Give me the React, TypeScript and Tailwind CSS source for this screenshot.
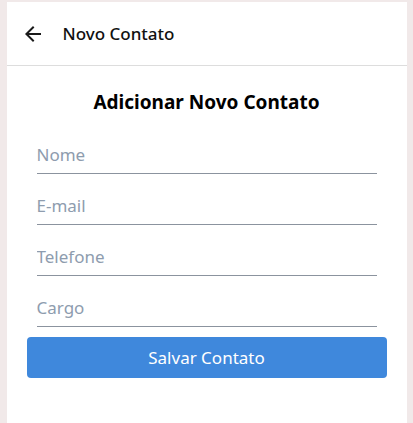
import React, { useState } from 'react';
import { MdArrowBack } from 'react-icons/md';

const fields = ['Nome', 'E-mail', 'Telefone', 'Cargo'];

const App: React.FC = () => {
  const [values, setValues] = useState<Record<string, string>>({});

  return (
    <div
      className="min-h-[423px] bg-[#f1e9e9] pt-[2px]"
      style={{ fontFamily: '"Noto Sans", "Open Sans", sans-serif' }}
    >
      <div className="mx-auto w-[400px] min-h-[421px] bg-white">
        {/* Header */}
        <div className="h-[64px] flex items-center px-[14px] border-b border-[#dddddd]">
          <button className="text-[#1a1a1a]">
            <MdArrowBack size={24} />
          </button>
          <h2 className="ml-[18px] text-[17px] font-medium text-[#111]">Novo Contato</h2>
        </div>

        {/* Form */}
        <div className="px-[20px] pt-[24px]">
          <h1 className="text-center text-[19px] leading-[25px] font-bold text-black mb-[21px]">
            Adicionar Novo Contato
          </h1>
          <div className="px-[10px] flex flex-col gap-[13px]">
            {fields.map((f) => (
              <input
                key={f}
                placeholder={f}
                value={values[f] || ''}
                onChange={(e) => setValues({ ...values, [f]: e.target.value })}
                className="h-[38px] w-full border-b border-[#8b939e] text-[17px] text-[#333] placeholder:text-[#8e9cae] outline-none bg-transparent"
              />
            ))}
          </div>
          <button className="mt-[10px] w-full h-[41px] rounded-[4px] bg-[#3f88dc] text-white text-[17px]">
            Salvar Contato
          </button>
        </div>
      </div>
    </div>
  );
};

export default App;
